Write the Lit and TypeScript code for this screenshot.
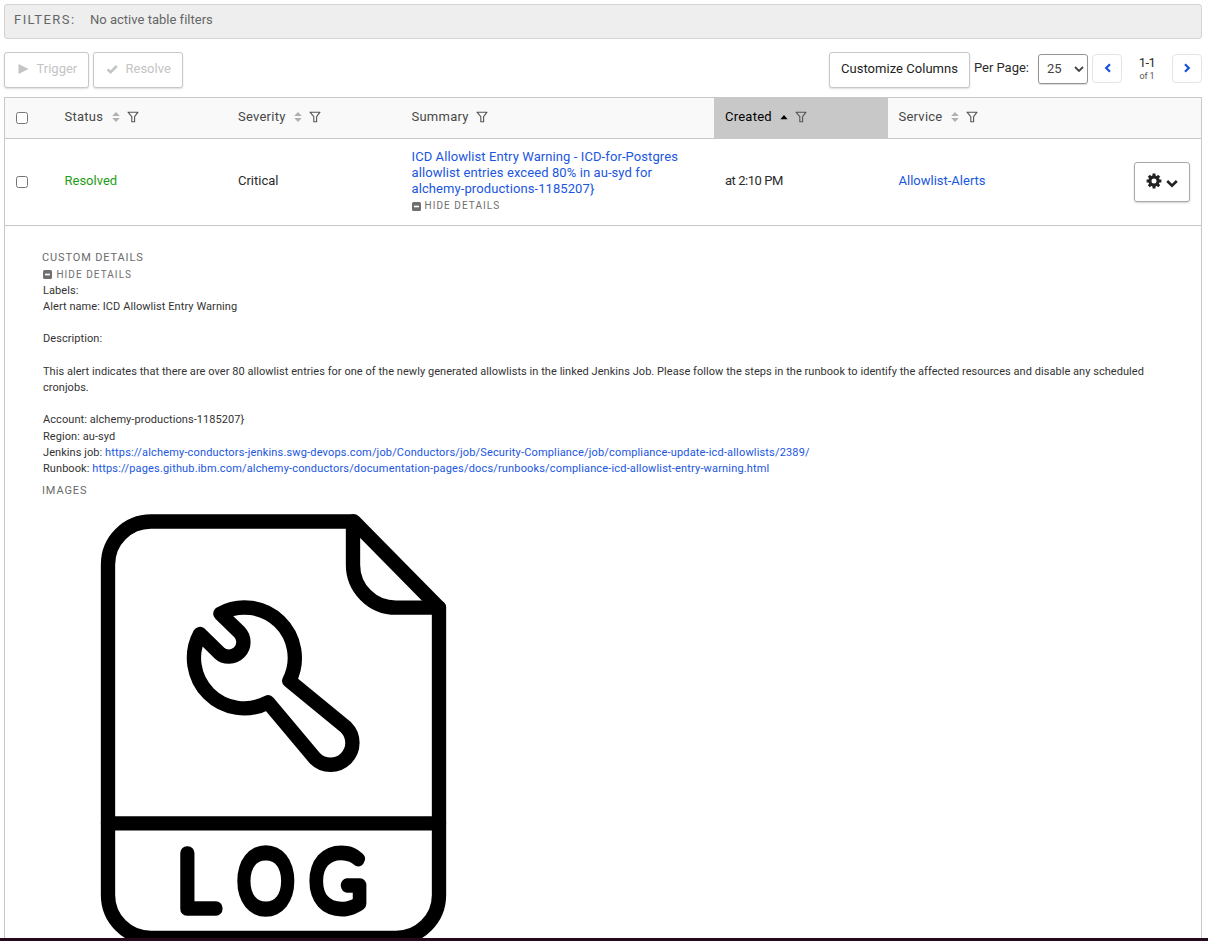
import { LitElement, html, svg, css, nothing } from "lit";
import { customElement } from "lit/decorators.js";

type Sort = "both" | "asc" | "none";

const funnel = html`<svg class="funnel" viewBox="0 0 12 12"><path d="M1 1.2h10L7.6 5.6v5.2H4.8V5.6z" fill="none" stroke="currentColor" stroke-width="1.1" stroke-linejoin="round"/></svg>`;
const sortBoth = html`<svg class="sort" viewBox="0 0 8 12"><path d="M4 1l3.8 4H.2zM4 11L.2 7h7.6z" fill="#b0b0b0"/></svg>`;
const sortAsc = html`<svg class="sort" viewBox="0 0 8 12"><path d="M4 4l3.6 4.2H.4z" fill="#000"/></svg>`;
const minus = html`<svg class="minus" viewBox="0 0 9 9"><rect width="9" height="9" rx="1.5" fill="#6f6f6f"/><path d="M2 4.5h5" stroke="#fff" stroke-width="1.6"/></svg>`;

@customElement("app-root")
export class AppRoot extends LitElement {
  static styles = css`
    :host { display: block; height: 941px; overflow: hidden; background: #fff; font: 13px/16px Roboto, sans-serif; color: #2b2b2b; }
    * { box-sizing: border-box; }
    svg { display: block; flex: none; }
    .page { height: 938px; padding: 4px 6px 0 4px; overflow: hidden; display: flex; flex-direction: column; }
    .strip { height: 3px; background: #250a1c; }
    .filters { flex: none; height: 35px; padding: 0 9px 4px; display: flex; align-items: center; background: #eee; border: 1px solid #d4d4d4; border-radius: 3px; color: #666; }
    .filters .label { width: 76px; letter-spacing: 1.45px; }
    .filters .value { letter-spacing: .01px; }
    .toolbar { flex: none; height: 36px; margin: 13px 0 9px; display: flex; align-items: flex-start; }
    .btn { height: 36px; padding-bottom: 2px; display: flex; align-items: center; justify-content: center; background: #fff; border: 1px solid #c8c8c8; border-radius: 3px; box-shadow: 0 1px 2px rgba(0,0,0,.14); }
    .disabled { color: #c4c4c4; justify-content: flex-start; padding-left: 12px; margin-right: 4px; }
    .disabled svg { width: 12px; height: 12px; margin-right: 7.5px; }
    .trigger { width: 85px; }
    .resolve { width: 90px; }
    .customize { width: 141px; margin-left: auto; color: #222; letter-spacing: .04px; }
    .per { padding: 8px 9px 0 4px; width: 68px; white-space: nowrap; letter-spacing: -.03px; }
    .select { width: 50px; height: 30px; margin-top: 2px; padding: 0 3px 1px 8px; display: flex; align-items: center; justify-content: space-between; border: 1px solid #949494; border-radius: 3px; box-shadow: 0 1px 1px rgba(0,0,0,.15); color: #444; }
    .select svg { width: 10px; height: 8px; }
    .nav { width: 30px; height: 29px; margin: 2px 0 0 4px; padding: 0 0 2px 1px; display: flex; align-items: center; justify-content: center; border: 1px solid #e4e4e4; border-radius: 4px; }
    .nav svg { width: 8px; height: 10px; }
    .range { width: 50px; text-align: center; line-height: 13px; padding-top: 4px; letter-spacing: -.5px; }
    .range small { display: block; font-size: 9px; line-height: 14px; color: #555; letter-spacing: -.1px; }
    .nav.next { margin-left: 0; padding-left: 0; }
    .table { flex: 1; min-height: 0; border: 1px solid #c8c8c8; border-bottom: 0; }
    .row { display: grid; grid-template-columns: 49px 173.5px 173.5px 313px 174px 1fr; }
    .head { height: 41px; background: #f9f9f9; border-bottom: 1px solid #c8c8c8; color: #484848; }
    .cell { padding: 0 0 2px 10.5px; display: flex; align-items: center; }
    .check { padding: 0 0 0 11px; }
    .box { width: 12px; height: 12px; border: 1px solid #767676; border-radius: 2.5px; background: #fff; }
    .sorted { background: #c8c8c8; color: #000; padding-left: 11px; }
    .title { letter-spacing: .24px; }
    .sort { width: 8px; height: 12px; margin-left: 8.6px; }
    .funnel { width: 12px; height: 12px; margin-left: 7px; color: #555; }
    .body { height: 87px; border-bottom: 1px solid #c8c8c8; }
    .green { color: #1f9d16; }
    a { color: #1a56e0; text-decoration: none; }
    .summary { flex-direction: column; align-items: flex-start; justify-content: center; gap: 1px; padding: 0 0 1px 10.5px; }
    .sum { letter-spacing: .09px; }
    .created { letter-spacing: -.45px; padding-left: 11px; }
    .hide { display: flex; align-items: center; gap: 4px; font-size: 10px; line-height: 16px; letter-spacing: 1.05px; color: #6f6f6f; }
    .minus { width: 9px; height: 9px; }
    .service { justify-content: space-between; padding-right: 11px; }
    .gear { width: 56px; height: 40px; display: flex; align-items: center; justify-content: center; gap: 4px; padding: 0 1px 3px 0; margin-top: 2px; border: 1px solid #a8a8a8; border-radius: 3px; box-shadow: 0 1px 2px rgba(0,0,0,.18); }
    .gear .cog { width: 16px; height: 16px; }
    .gear .caret { width: 12px; height: 9px; margin-top: 5px; }
    .details { padding: 24px 37px 0; }
    .caption { font-size: 11px; line-height: 16px; letter-spacing: .87px; color: #6a6a6a; }
    .text { padding-left: 1px; margin-top: -.2px; font-size: 11px; line-height: 16.2px; color: #333; }
    .line { min-height: 16.2px; white-space: nowrap; letter-spacing: .07px; }
    .line.long { letter-spacing: .047px; }
    .line a { letter-spacing: .165px; }
    .details .hide { line-height: 17px; padding-left: 1.4px; }
    .images { margin-top: 6px; }
    .picture { width: 370px; height: 438px; margin: 1px 0 0 48px; }
    .log { font-family: Lato, sans-serif; font-weight: 100; font-size: 241px; stroke-width: 13.4px; }
    .log text { vector-effect: non-scaling-stroke; }
  `;

  private column(title: string, sort: Sort) {
    return html`<div class="cell ${sort === "asc" ? "sorted" : ""}"><span class="title">${title}</span>${
      sort === "both" ? sortBoth : sort === "asc" ? sortAsc : nothing
    }${funnel}</div>`;
  }

  private picture() {
    return html`<svg class="picture" viewBox="0 0 1110 1314" fill="none" stroke="#000" stroke-width="43" stroke-linejoin="round" stroke-linecap="round">
      ${svg`<path d="M183 64.5H792L1047 323V1185A129 129 0 0 1 918 1314H183A129 129 0 0 1 54 1185V193.5A129 129 0 0 1 183 64.5Z"/>
      <path d="M789 64.5V194A129 129 0 0 0 918 323H1047M54 970H1047"/>
      <path d="M391 341A151 151 0 0 1 598 542L768 682A64.5 64.5 0 1 1 675 775L534 607A151 151 0 0 1 330 402L387 458A43.5 43.5 0 0 0 448 396Z"/>
      <g class="log" fill="#000">
        <text transform="translate(263 1228) scale(.98 1)">L</text>
        <text transform="translate(446 1228) scale(.86 1)">O</text>
        <text transform="translate(662 1228) scale(.92 1)">G</text>
      </g>`}
    </svg>`;
  }

  render() {
    return html`
      <div class="page">
        <div class="filters"><span class="label">FILTERS:</span><span class="value">No active table filters</span></div>
        <div class="toolbar">
          <div class="btn disabled trigger"><svg viewBox="0 0 12 12"><path d="M1.5 1L11.5 6l-10 5z" fill="currentColor"/></svg><span>Trigger</span></div>
          <div class="btn disabled resolve"><svg viewBox="0 0 12 12"><path d="M1.5 6.3L4.6 9.2 10.8 3" fill="none" stroke="currentColor" stroke-width="2.5"/></svg><span>Resolve</span></div>
          <div class="btn customize"><span>Customize Columns</span></div>
          <div class="per">Per Page:</div>
          <div class="select"><span>25</span><svg viewBox="0 0 10 8"><path d="M1 2l4 4 4-4" fill="none" stroke="#444" stroke-width="1.8"/></svg></div>
          <div class="nav"><svg viewBox="0 0 8 10"><path d="M6 1.2L2.2 5 6 8.8" fill="none" stroke="#1a4fe0" stroke-width="2.2"/></svg></div>
          <div class="range">1-1<small>of 1</small></div>
          <div class="nav next"><svg viewBox="0 0 8 10"><path d="M2 1.2L5.8 5 2 8.8" fill="none" stroke="#1a4fe0" stroke-width="2.2"/></svg></div>
        </div>
        <div class="table">
          <div class="row head">
            <div class="check cell"><span class="box"></span></div>
            ${this.column("Status", "both")}${this.column("Severity", "both")}${this.column("Summary", "none")}${this.column("Created", "asc")}${this.column("Service", "both")}
          </div>
          <div class="row body">
            <div class="check cell"><span class="box"></span></div>
            <div class="cell green">Resolved</div>
            <div class="cell">Critical</div>
            <div class="cell summary"><a class="sum">ICD Allowlist Entry Warning - ICD-for-Postgres<br>allowlist entries exceed 80% in au-syd for<br>alchemy-productions-1185207}</a><div class="hide">${minus}HIDE DETAILS</div></div>
            <div class="cell created">at 2:10 PM</div>
            <div class="cell service"><a>Allowlist-Alerts</a>
              <div class="gear">
                <svg class="cog" viewBox="0 0 16 16"><circle cx="8" cy="8" r="4.1" fill="none" stroke="#222" stroke-width="3.2"/><path d="M8 .6v3M8 12.4v3M.6 8h3M12.4 8h3M2.8 2.8l2 2M11.2 11.2l2 2M2.8 13.2l2-2M11.2 4.8l2-2" stroke="#222" stroke-width="3"/></svg>
                <svg class="caret" viewBox="0 0 12 9"><path d="M1.2 2L6 6.6 10.8 2" fill="none" stroke="#222" stroke-width="2.6"/></svg>
              </div>
            </div>
          </div>
          <div class="details">
            <div class="caption">CUSTOM DETAILS</div>
            <div class="hide">${minus}HIDE DETAILS</div>
            <div class="text">
              <div class="line">Labels:</div>
              <div class="line">Alert name: ICD Allowlist Entry Warning</div>
              <div class="line"></div>
              <div class="line">Description:</div>
              <div class="line"></div>
              <div class="line long">This alert indicates that there are over 80 allowlist entries for one of the newly generated allowlists in the linked Jenkins Job. Please follow the steps in the runbook to identify the affected resources and disable any scheduled<br>cronjobs.</div>
              <div class="line"></div>
              <div class="line">Account: alchemy-productions-1185207}</div>
              <div class="line">Region: au-syd</div>
              <div class="line">Jenkins job: <a>https://alchemy-conductors-jenkins.swg-devops.com/job/Conductors/job/Security-Compliance/job/compliance-update-icd-allowlists/2389/</a></div>
              <div class="line">Runbook: <a>https://pages.github.ibm.com/alchemy-conductors/documentation-pages/docs/runbooks/compliance-icd-allowlist-entry-warning.html</a></div>
            </div>
            <div class="caption images">IMAGES</div>
            ${this.picture()}
          </div>
        </div>
      </div>
      <div class="strip"></div>
    `;
  }
}
